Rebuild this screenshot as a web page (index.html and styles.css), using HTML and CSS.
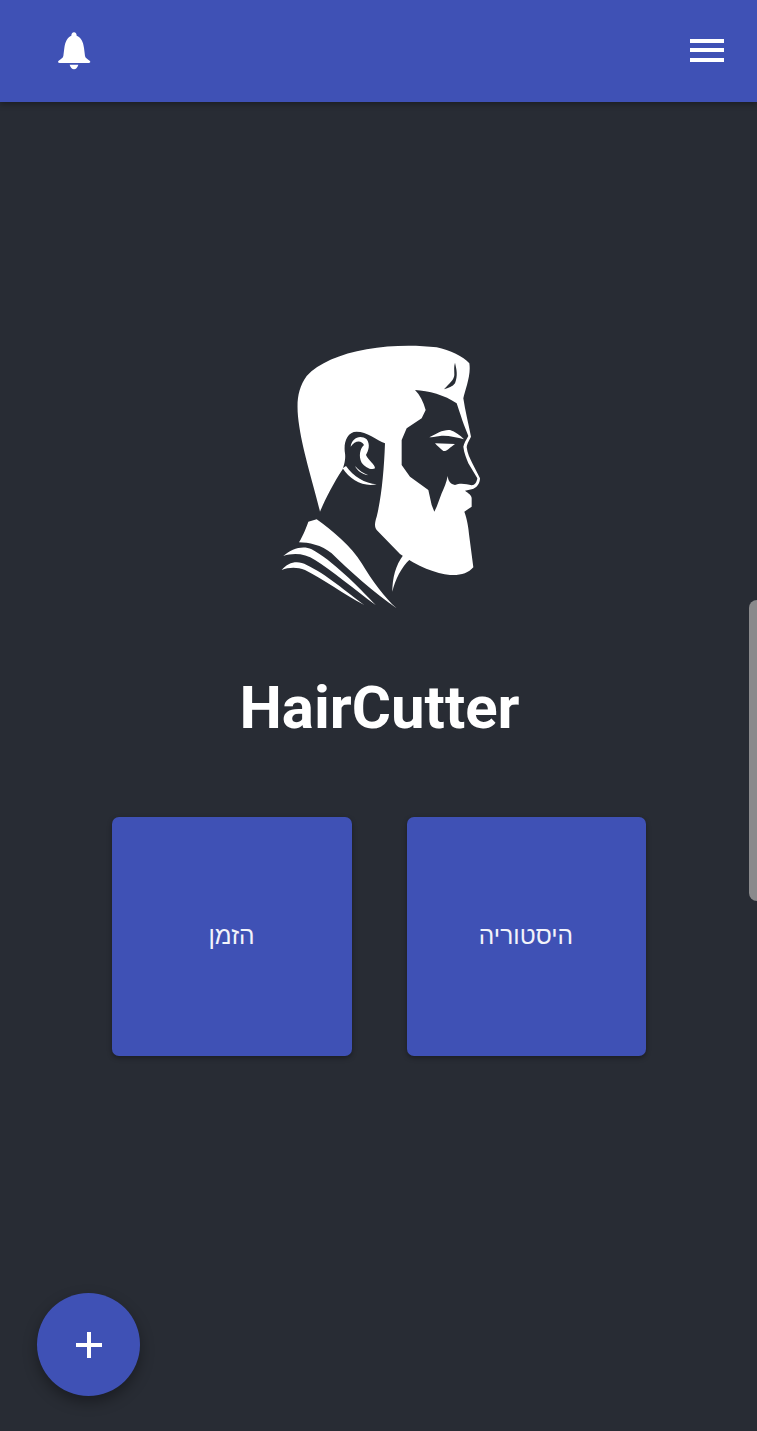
FILE: index.html
```html
<!DOCTYPE html>
<html lang="he">
<head>
    <meta charset="UTF-8">
    <meta name="viewport" content="width=device-width, initial-scale=1.0">
    <title>HairCutter</title>
    <link rel="stylesheet" href="styles.css">
</head>
<body>

<header class="topbar">
    <svg class="bell" viewBox="0 0 180 180" aria-label="notifications">
        <path d="M87 37C92 37 95 41 95 47C108 52 115 66 117 84L120 108C121 114 128 118 135 123C137 126 135 129 131 129H44C40 129 38 126 40 123C47 118 54 114 55 108L58 84C60 66 67 52 79 47C79 41 82 37 87 37Z"/>
        <path d="M74 134H100C98 142 93 148 87 148C81 148 76 142 74 134Z"/>
    </svg>
    <div class="menu-icon"><span></span><span></span><span></span></div>
</header>

<main class="home">
    <!-- Logo: bearded man in profile -->
    <svg class="logo" viewBox="0 0 720 870" aria-label="HairCutter logo">
        <path class="light" d="M180 545C165 480 130 370 118 290C108 225 110 180 140 138C175 100 240 72 320 58C390 45 470 45 530 52C570 60 610 80 628 100C634 135 615 180 610 205C615 240 625 280 633 320C625 335 620 345 620 352C622 370 630 385 637 400L660 445C660 460 650 475 635 478L615 482C625 490 635 495 635 505L635 530L613 545C622 570 625 590 628 620L640 712C625 730 600 737 570 735C530 732 470 708 420 672L350 600C342 590 345 575 350 560C365 500 372 420 375 340C350 330 320 305 290 305C260 305 250 340 255 370C258 390 250 410 248 418C220 460 195 510 180 545Z"/>
        <!-- face -->
        <path class="dark" d="M465 180C505 182 555 195 590 220C600 250 605 265 612 285L625 318C618 330 612 340 610 350C612 370 620 385 625 400L652 445C650 458 645 465 635 466C620 462 600 458 585 465C572 462 565 455 563 438C560 455 552 475 545 490L530 530L523 545L515 525L505 480L450 440L425 405L425 330L440 295L485 265L497 240C490 215 480 195 465 180Z"/>
        <path class="dark" d="M585 98C590 120 594 135 585 160C578 170 565 175 552 178C568 160 582 150 583 135C583 120 581 110 585 98Z"/>
        <path class="light" d="M508 322C530 310 550 298 570 300C585 305 600 315 612 328C590 322 560 315 540 318C525 320 515 322 508 322Z"/>
        <path class="light" d="M525 340L585 342C570 352 560 365 550 363C540 355 532 348 525 340Z"/>
        <!-- ear -->
        <path class="light" d="M272 350C275 325 300 312 320 328C332 345 325 362 318 375C325 392 345 402 345 415C335 422 315 412 305 398C295 380 300 355 312 345C305 330 285 330 272 350Z"/>
        <path class="light" d="M248 415C270 450 310 472 350 463C315 460 280 440 258 408Z"/>
        <path class="light" d="M285 408C295 420 310 430 325 436C305 432 292 422 285 408Z"/>
        <!-- collar -->
        <g class="light" transform="translate(45 540)">
            <path d="M100 35L125 28C170 60 230 110 260 160C290 210 330 265 365 295C300 250 220 180 170 130C140 105 100 97 72 97C85 75 95 50 100 35Z"/>
            <path d="M25 138C50 115 85 105 110 118C170 150 250 230 302 285C240 240 170 180 120 150C90 130 55 128 25 138Z"/>
            <path d="M20 180C40 155 70 150 95 165C150 190 220 250 268 285C210 255 140 205 90 180C65 170 40 172 20 180Z"/>
            <path d="M385 135L405 148C380 170 360 210 352 245C352 205 362 165 385 135Z"/>
        </g>
    </svg>

    <h1 class="title">HairCutter</h1>

    <div class="actions">
        <button class="action-btn">הזמן</button>
        <button class="action-btn history-btn">היסטוריה</button>
    </div>
</main>

<button class="fab" aria-label="add">
    <svg viewBox="0 0 28 28"><path d="M14 1v26M1 14h26"/></svg>
</button>

<div class="side-handle"></div>

</body>
</html>
```

FILE: styles.css
```css
body {
    font-family: 'Roboto', sans-serif;
    margin: 0;
    padding: 0;
    height: 1431px;
    overflow: hidden;
    position: relative;
    background-color: #282c34;
    color: #fff;
}
.topbar {
    height: 102px;
    background-color: #3f51b5;
    box-shadow: 0 2px 6px rgba(0, 0, 0, 0.35);
    display: flex;
    justify-content: space-between;
    align-items: center;
    padding: 0 33px 0 45px;
}
.bell {
    width: 60px;
    height: 60px;
    margin-bottom: 2px;
    fill: #fff;
}
.menu-icon {
    display: flex;
    flex-direction: column;
    gap: 5.5px;
    width: 34px;
    margin-bottom: 2px;
}
.menu-icon span {
    height: 4px;
    background-color: #fff;
}
.home {
    display: flex;
    flex-direction: column;
    align-items: center;
    padding: 228px 0 0 2px;
}
.logo {
    width: 240px;
    height: 290px;
}
.logo .light {
    fill: #fff;
}
.logo .dark {
    fill: #282c34;
}
.title {
    font-size: 60px;
    font-weight: 700;
    line-height: 77px;
    margin: 49px 0 71px;
}
.actions {
    display: flex;
    gap: 55px;
    margin-right: 2px;
}
.action-btn {
    width: 240px;
    height: 239px;
    background-color: #3f51b5;
    color: #f2f3fa;
    border: none;
    border-radius: 7px;
    box-shadow: 0 2px 5px rgba(0, 0, 0, 0.35);
    font-family: 'Noto Sans', 'Liberation Sans', sans-serif;
    font-size: 24.5px;
    padding: 0 0 4px;
}
.history-btn {
    width: 239px;
}
.fab {
    position: absolute;
    left: 37px;
    top: 1293px;
    width: 103px;
    height: 103px;
    border-radius: 50%;
    border: none;
    padding: 0;
    background-color: #3f51b5;
    box-shadow: 0 6px 14px rgba(0, 0, 0, 0.35);
    display: flex;
    align-items: center;
    justify-content: center;
}
.fab svg {
    width: 28px;
    height: 28px;
    fill: none;
    stroke: #fff;
    stroke-width: 4;
}
.side-handle {
    position: absolute;
    right: 0;
    top: 600px;
    width: 8px;
    height: 301px;
    background-color: #8a8a8c;
    border-radius: 8px 0 0 8px;
}
```
